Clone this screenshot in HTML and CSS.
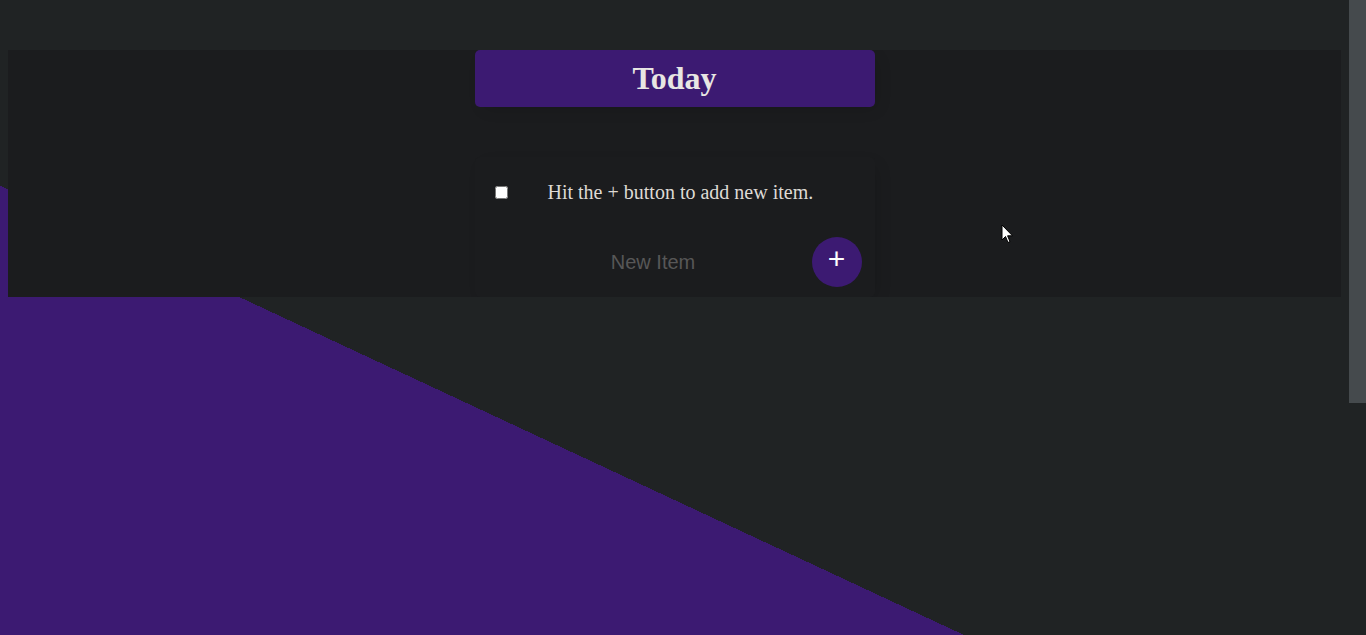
FILE: index.html
```html
<!DOCTYPE html>
<html lang="en">
<head>
<meta charset="utf-8">
<title>Today</title>
<link rel="stylesheet" href="styles.css">
</head>
<body>
  <div class="box heading">
    <h1>Today</h1>
  </div>
  <div class="box list">
    <div class="item">
      <input type="checkbox" class="check">
      <p class="text">Hit the + button to add new item.</p>
    </div>
    <form class="item form" onsubmit="return false">
      <input type="text" class="new-item" placeholder="New Item" autocomplete="off"><button type="submit" class="add">+</button>
    </form>
  </div>
  <div class="scrollbar" aria-hidden="true"><div class="thumb"></div></div>
  <svg class="cursor" width="14" height="22" viewBox="0 0 14 22" aria-hidden="true">
    <path d="M1 1 L1 16 L4.5 12.5 L7 18.5 L9 17.6 L6.6 11.8 L11.5 11.8 Z" fill="#fff" stroke="#000" stroke-width="1" stroke-linejoin="round"/>
  </svg>
</body>
</html>
```
FILE: styles.css
```css
html {
  height: 100%;
  overflow: hidden;
  background-color: #202324;
  background-image: linear-gradient(25deg, #3c1a72 50%, #202324 50%);
  background-size: calc(100% - 17px) 1000px;
  background-repeat: no-repeat;
  font-family: "Liberation Sans", Arial, sans-serif;
}

body {
  margin: 50px 25px 0 8px;
  padding: 0;
  background-color: #1b1c1e;
}

.box {
  max-width: 400px;
  margin: 0 auto;
  background-color: #1b1c1e;
  border-radius: 5px;
  box-shadow: 5px 5px 15px -5px rgba(0, 0, 0, 0.18);
}

.heading {
  background-color: #3c1a72;
  text-align: center;
}

.list {
  margin-top: 50px;
}

h1 {
  margin: 0;
  padding: 10px;
  font-family: "Liberation Serif", "Times New Roman", serif;
  font-size: 32px;
  font-weight: bold;
  line-height: 37px;
  color: #e8e6e3;
}

.item {
  min-height: 70px;
  display: flex;
  align-items: center;
}

.check {
  margin: 20px;
  width: 13px;
  height: 13px;
}

.text {
  margin: 0;
  padding: 20px;
  font-family: "Liberation Serif", "Times New Roman", serif;
  font-size: 20px;
  color: #dedad5;
}

.form {
  margin: 0 0 0 20px;
}

.new-item {
  box-sizing: border-box;
  text-align: center;
  height: 60px;
  border: none;
  background: transparent;
  font-family: "Liberation Sans", Arial, sans-serif;
  font-size: 20px;
  width: 317px;
  padding: 1px 2px;
  margin: 0;
  color: #e8e6e3;
}

.new-item::placeholder {
  color: #575757;
  opacity: 1;
}

.new-item:focus {
  outline: none;
}

.add {
  height: 50px;
  width: 50px;
  margin: 0;
  border-radius: 50%;
  border: 0;
  background-color: #3c1a72;
  color: #fff;
  font-family: "Liberation Sans", Arial, sans-serif;
  font-size: 30px;
  padding: 0 0 6px 0;
}

.scrollbar {
  position: fixed;
  top: 0;
  right: 0;
  width: 17px;
  height: 100%;
  background-color: #202324;
}

.thumb {
  height: 403px;
  background-color: #454a4d;
}

.cursor {
  position: absolute;
  left: 1001px;
  top: 224px;
}
```
